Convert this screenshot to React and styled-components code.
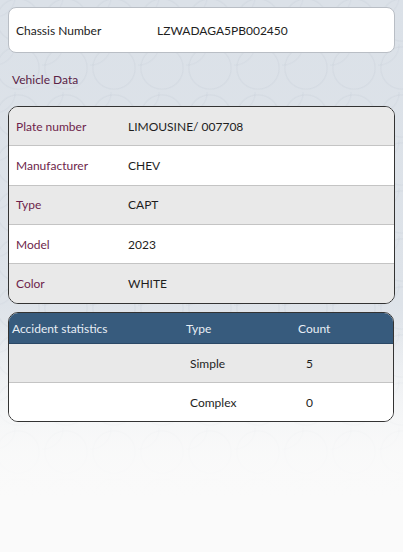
import React from 'react'
import styled, { createGlobalStyle } from 'styled-components'

const GlobalStyle = createGlobalStyle`
    html, body {
        margin: 0;
        padding: 0;
        background: #fafafa;
    }
    * {
        box-sizing: border-box;
    }
`;

const vehicleData = [
    { label: 'Plate number', value: 'LIMOUSINE/ 007708' },
    { label: 'Manufacturer', value: 'CHEV' },
    { label: 'Type', value: 'CAPT' },
    { label: 'Model', value: '2023' },
    { label: 'Color', value: 'WHITE' },
];

const accidents = [
    { type: 'Simple', count: 5 },
    { type: 'Complex', count: 0 },
];

export default function App() {
    return (
        <>
            <GlobalStyle />
            <Page>
                <ChassisCard>
                    <ChassisLabel>Chassis Number</ChassisLabel>
                    <Value>LZWADAGA5PB002450</Value>
                </ChassisCard>

                <SectionTitle>Vehicle Data</SectionTitle>

                <DataCard>
                    {vehicleData.map((item, index) => (
                        <DataRow key={index} $odd={index % 2 === 0} $last={index === vehicleData.length - 1}>
                            <DataLabel>{item.label}</DataLabel>
                            <Value>{item.value}</Value>
                        </DataRow>
                    ))}
                </DataCard>

                <StatsCard>
                    <StatsHeader>
                        <HeadCell $pad={3}>Accident statistics</HeadCell>
                        <HeadCell $pad={4}>Type</HeadCell>
                        <HeadCell $pad={4}>Count</HeadCell>
                    </StatsHeader>
                    {accidents.map((item, index) => (
                        <StatsRow key={index} $odd={index % 2 === 0} $last={index === accidents.length - 1}>
                            <Cell $pad={3}></Cell>
                            <Cell $pad={8}>{item.type}</Cell>
                            <Cell $pad={12}>{item.count}</Cell>
                        </StatsRow>
                    ))}
                </StatsCard>
            </Page>
        </>
    )
}

const Page = styled.div`
    min-height: 100vh;
    padding: 7px 8px 40px 8px;
    font-family: Lato, "Open Sans", sans-serif;
    font-size: 12px;
    color: #222;
    background-color: #fafafa;
    background-image:
        linear-gradient(180deg, rgba(250, 250, 250, 0) 0%, rgba(250, 250, 250, 0) 58%, rgba(250, 250, 250, 0.85) 82%, #fafafa 90%),
        radial-gradient(circle at 24px 24px, transparent 20px, rgba(175, 185, 198, 0.16) 21px, transparent 22.5px),
        radial-gradient(circle at 0 0, transparent 20px, rgba(175, 185, 198, 0.13) 21px, transparent 22.5px),
        linear-gradient(180deg, #dbe1e8 0%, #dee3e9 55%, #f0f2f4 80%, #fafafa 92%);
    background-size: 100% 100%, 48px 48px, 48px 48px, 100% 100%;
    background-position: 0 0, -6px -4px, -6px -4px, 0 0;
    background-repeat: no-repeat, repeat, repeat, no-repeat;
`;

const ChassisCard = styled.div`
    display: flex;
    align-items: center;
    height: 46px;
    padding-left: 7px;
    background: #fff;
    border: 1px solid #b9bec5;
    border-radius: 8px;
`;

const ChassisLabel = styled.div`
    width: 141px;
    color: #222;
`;

const Value = styled.div`
    color: #1e1e1e;
`;

const SectionTitle = styled.div`
    height: 53px;
    display: flex;
    align-items: center;
    padding-left: 4px;
    color: #5a2346;
`;

const DataCard = styled.div`
    border: 1.5px solid #333;
    border-radius: 10px;
    overflow: hidden;
    background: #fff;
`;

const DataRow = styled.div`
    display: flex;
    align-items: center;
    height: 39.3px;
    padding-left: 7px;
    background: ${p => p.$odd ? '#e9e9e9' : '#ffffff'};
    border-bottom: ${p => p.$last ? 'none' : '1px solid #c4c4c4'};
`;

const DataLabel = styled.div`
    width: 112px;
    color: #6e1f4b;
`;

const StatsCard = styled.div`
    margin-top: 8px;
    margin-right: 1px;
    border: 1.5px solid #333;
    border-radius: 10px;
    overflow: hidden;
    background: #fff;
`;

const StatsHeader = styled.div`
    display: grid;
    grid-template-columns: 173px 112px 1fr;
    align-items: center;
    height: 31px;
    background: #375b7d;
    border-bottom: 1px solid #2a4866;
`;

const HeadCell = styled.div`
    padding-left: ${p => p.$pad}px;
    color: #e8eef5;
`;

const StatsRow = styled.div`
    display: grid;
    grid-template-columns: 173px 112px 1fr;
    align-items: center;
    height: 38.5px;
    background: ${p => p.$odd ? '#e9e9e9' : '#ffffff'};
    border-bottom: ${p => p.$last ? 'none' : '1px solid #c4c4c4'};
`;

const Cell = styled.div`
    padding-left: ${p => p.$pad}px;
    color: #1e1e1e;
`;
